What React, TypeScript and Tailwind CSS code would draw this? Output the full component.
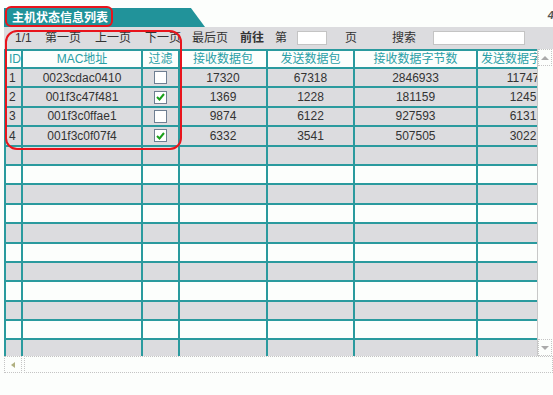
import React from "react";

type Row = { id: string; mac: string; filter: boolean; rx: string; tx: string; rxb: string; txb: string };

const rows: Row[] = [
  { id: "1", mac: "0023cdac0410", filter: false, rx: "17320", tx: "67318", rxb: "2846933", txb: "11747" },
  { id: "2", mac: "001f3c47f481", filter: true, rx: "1369", tx: "1228", rxb: "181159", txb: "1245" },
  { id: "3", mac: "001f3c0ffae1", filter: false, rx: "9874", tx: "6122", rxb: "927593", txb: "6131" },
  { id: "4", mac: "001f3c0f07f4", filter: true, rx: "6332", tx: "3541", rxb: "507505", txb: "3022" },
];

const blanks = Array.from({ length: 12 });

function Check({ on }: { on: boolean }) {
  return (
    <div className="w-[13px] h-[13px] border border-[#6f7f92] bg-white flex items-center justify-center">
      {on && (
        <svg width="9" height="8" viewBox="0 0 9 8">
          <path d="M1 4 L3.5 6.5 L8 1" fill="none" stroke="#1aa01a" strokeWidth="2" />
        </svg>
      )}
    </div>
  );
}

function Cells({ r, header }: { r?: Row; header?: boolean }) {
  const c = "h-full flex items-center justify-center border-r-2 border-[#2a9a9e] shrink-0";
  const t = header ? "text-[#2a9fa6]" : "text-[#333]";
  return (
    <>
      <div className={`w-[17px] h-full flex items-center pl-[3px] border-r-2 border-[#2a9a9e] shrink-0 ${t}`}>{header ? "ID" : r?.id}</div>
      <div className={`w-[120px] ${c} ${t}`}>{header ? "MAC地址" : r?.mac}</div>
      <div className={`w-[37px] ${c} ${t}`}>{header ? "过滤" : r ? <Check on={r.filter} /> : null}</div>
      <div className={`w-[88px] ${c} ${t}`}>{header ? "接收数据包" : r?.rx}</div>
      <div className={`w-[87px] ${c} ${t}`}>{header ? "发送数据包" : r?.tx}</div>
      <div className={`w-[123px] ${c} ${t}`}>{header ? "接收数据字节数" : r?.rxb}</div>
      <div className={`w-[92px] ${c} ${t}`}>{header ? "发送数据字节数" : r?.txb}</div>
    </>
  );
}

export default function App() {
  return (
    <div
      className="relative w-[553px] h-[395px] bg-[#fcfefc] overflow-hidden text-[12px] leading-none"
      style={{ fontFamily: '"Liberation Sans", "Noto Sans CJK SC", sans-serif' }}
    >
      {/* title tab */}
      <div className="flex items-end h-[27px] pl-[4px]">
        <div className="h-[19px] w-[201px] bg-[#21939a] [clip-path:polygon(0_0,93%_0,100%_100%,0_100%)] flex items-center pl-[8px]">
          <span className="text-white font-bold text-[12px]">主机状态信息列表</span>
        </div>
        <span className="ml-auto mr-[-10px] mb-[6px] italic font-bold text-[11px] text-[#555]">4/4</span>
      </div>

      {/* toolbar */}
      <div className="ml-[4px] h-[22px] bg-[#dcdcdf] flex items-center pl-[11px] text-[#333]">
        <span className="w-[30px]">1/1</span>
        <span className="w-[50px]">第一页</span>
        <span className="w-[50px]">上一页</span>
        <span className="w-[47px]">下一页</span>
        <span className="w-[48px]">最后页</span>
        <span className="w-[35px] font-bold">前往</span>
        <span className="w-[22px]">第</span>
        <div className="w-[30px] h-[14px] bg-white border border-[#c4c4c4]" />
        <span className="ml-[18px] w-[47px]">页</span>
        <span className="w-[41px]">搜索</span>
        <div className="w-[92px] h-[14px] bg-white border border-[#c4c4c4]" />
      </div>

      {/* table + vertical scrollbar */}
      <div className="flex ml-[4px] h-[307px]">
        <div className="w-[533px] overflow-hidden border-t-2 border-l-2 border-[#2a9a9e]">
          <div className="flex h-[18px] border-b-2 border-[#2a9a9e] bg-[#fcfefc]">
            <Cells header />
          </div>
          {rows.map((r) => (
            <div key={r.id} className="flex h-[19.4px] border-b-2 border-[#2a9a9e] bg-[#dcdcdf]">
              <Cells r={r} />
            </div>
          ))}
          {blanks.map((_, i) => (
            <div
              key={i}
              className={`flex h-[19.4px] border-b-2 border-[#2a9a9e] ${i % 2 === 0 ? "bg-[#dcdcdf]" : "bg-[#fcfefc]"}`}
            >
              <Cells />
            </div>
          ))}
        </div>
        <div className="w-[15px] border-l border-[#c8c8c8] flex flex-col justify-between bg-[#fcfefc]">
          <div className="h-[17px] border border-dotted border-[#c4c4c4] flex items-center justify-center">
            <div className="w-0 h-0 border-x-[4px] border-x-transparent border-b-[4px] border-b-[#aaa]" />
          </div>
          <div className="h-[17px] border border-dotted border-[#c4c4c4] flex items-center justify-center">
            <div className="w-0 h-0 border-x-[4px] border-x-transparent border-t-[4px] border-t-[#aaa]" />
          </div>
        </div>
      </div>

      {/* horizontal scrollbar */}
      <div className="flex ml-[4px] h-[17px] gap-[2px]">
        <div className="w-[18px] border border-dotted border-[#c4c4c4] flex items-center justify-center">
          <div className="w-0 h-0 border-y-[3px] border-y-transparent border-r-[4px] border-r-[#b0b080]" />
        </div>
        <div className="flex-1 border border-dotted border-[#c4c4c4]" />
      </div>

      {/* annotations */}
      <div className="absolute left-[5px] top-[6px] w-[108px] h-[21px] border-2 border-[#e8141c] rounded-[6px]" />
      <div className="absolute left-[5px] top-[30px] w-[177px] h-[120px] border-2 border-[#e8141c] rounded-[12px]" />
    </div>
  );
}
